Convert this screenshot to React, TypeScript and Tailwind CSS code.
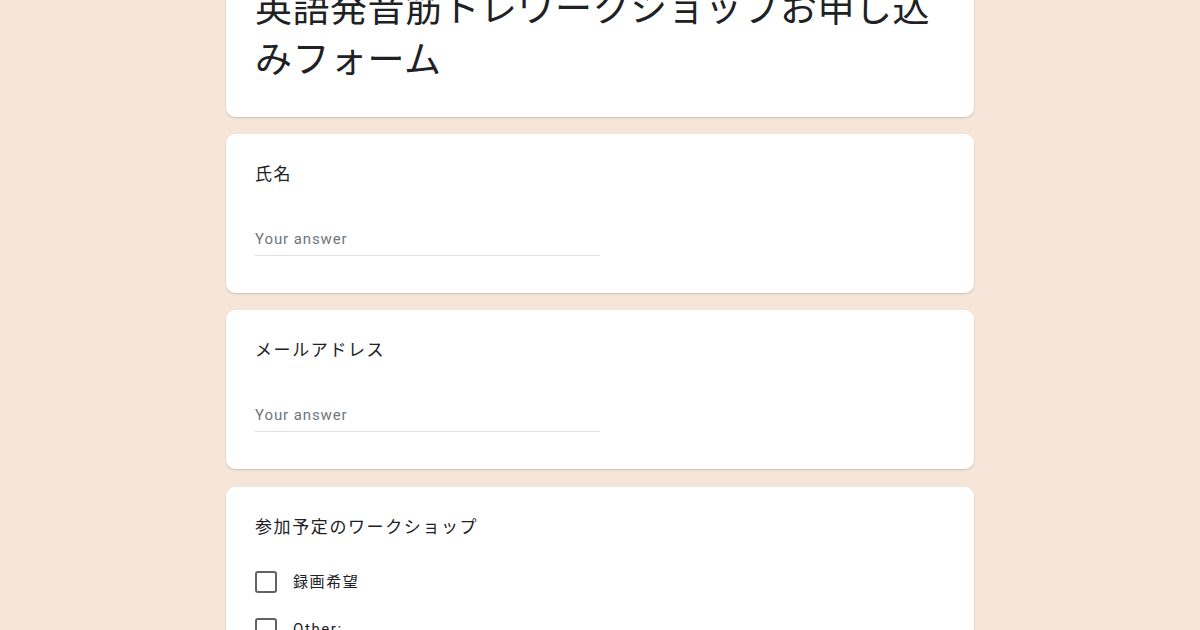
import React from "react";

const font = { fontFamily: "Roboto, 'Noto Sans CJK JP', sans-serif" };

function Card({ children, className = "" }: { children: React.ReactNode; className?: string }) {
  return (
    <div className={`w-[748px] rounded-[9px] bg-white shadow-[0_1px_2px_rgba(0,0,0,0.18)] px-[29px] ${className}`}>
      {children}
    </div>
  );
}

function TextQuestion({ label }: { label: string }) {
  return (
    <Card className="pt-[28px] pb-[37px]">
      <div className="text-[17px] leading-[24px] text-[#202124] tracking-[1.6px]">{label}</div>
      <div className="mt-[38px] w-[345px] h-[32px] flex items-center border-b border-[#e0e0e0] text-[15px] text-[#70757a] tracking-[0.9px]">
        Your answer
      </div>
    </Card>
  );
}

function CheckRow({ label }: { label: string }) {
  return (
    <div className="flex items-center h-[24px]">
      <div className="w-[22px] h-[22px] rounded-[3px] border-2 border-[#5f6368]" />
      <div className="ml-[16px] text-[15px] text-[#202124] tracking-[1.6px]">{label}</div>
    </div>
  );
}

export default function App() {
  return (
    <div style={font} className="w-[1200px] h-[630px] overflow-hidden bg-[#f6e6da]">
      <div className="flex flex-col items-center gap-[17px]">
        <Card className="-mt-[40px] pt-[24px] pb-[31px]">
          <div className="text-[37px] leading-[51px] text-[#202124] font-normal tracking-[0.5px]">
            英語発音筋トレワークショップお申し込みフォーム
          </div>
        </Card>
        <TextQuestion label="氏名" />
        <TextQuestion label="メールアドレス" />
        <Card className="pt-[28px] pb-[40px] mt-[1px]">
          <div className="text-[17px] leading-[24px] text-[#202124] tracking-[1.6px]">参加予定のワークショップ</div>
          <div className="mt-[31px] flex flex-col gap-[23px]">
            <CheckRow label="録画希望" />
            <CheckRow label="Other:" />
          </div>
        </Card>
      </div>
    </div>
  );
}
